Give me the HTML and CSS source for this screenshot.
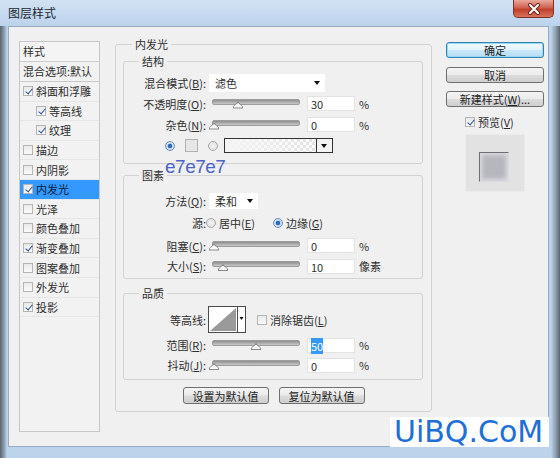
FILE: index.html
```html
<!DOCTYPE html>
<html lang="zh-CN">
<head>
  <meta charset="UTF-8">
  <title>图层样式</title>
  <link rel="stylesheet" href="styles.css">
</head>
<body>
  <div class="window">
    <div class="titlebar">
      <span class="title">图层样式</span>
      <span class="close">
        <svg width="14" height="12" viewBox="0 0 14 12">
          <path d="M3 2 L11 10 M11 2 L3 10" stroke="#6b2a22" stroke-width="4" stroke-linecap="round"/>
          <path d="M3 2 L11 10 M11 2 L3 10" stroke="#fff" stroke-width="2" stroke-linecap="round"/>
        </svg>
      </span>
    </div>

    <div class="frame">
      <div class="client">
        <div class="style-list">
          <div class="list-head">样式</div>
          <div class="list-blend">混合选项:默认</div>
          <div class="list-item"><span class="cb on"></span>斜面和浮雕</div>
          <div class="list-item sub"><span class="cb on"></span>等高线</div>
          <div class="list-item sub"><span class="cb on"></span>纹理</div>
          <div class="list-item"><span class="cb"></span>描边</div>
          <div class="list-item"><span class="cb"></span>内阴影</div>
          <div class="list-item active"><span class="cb on"></span>内发光</div>
          <div class="list-item"><span class="cb"></span>光泽</div>
          <div class="list-item"><span class="cb"></span>颜色叠加</div>
          <div class="list-item"><span class="cb on"></span>渐变叠加</div>
          <div class="list-item"><span class="cb"></span>图案叠加</div>
          <div class="list-item"><span class="cb"></span>外发光</div>
          <div class="list-item"><span class="cb on"></span>投影</div>
        </div>

        <fieldset class="group outer">
          <legend>内发光</legend>

          <fieldset class="group structure">
            <legend>结构</legend>
            <div class="row">
              <span class="label">混合模式(<u>B</u>):</span>
              <span class="select mode">滤色<i class="arrow"></i></span>
            </div>
            <div class="row">
              <span class="label">不透明度(<u>O</u>):</span>
              <span class="slider"><span class="thumb" style="left: 21px"></span></span>
              <span class="field">30</span>
              <span class="unit">%</span>
            </div>
            <div class="row">
              <span class="label">杂色(<u>N</u>):</span>
              <span class="slider"><span class="thumb" style="left: -3px"></span></span>
              <span class="field">0</span>
              <span class="unit">%</span>
            </div>
            <div class="row color-row">
              <span class="radio on"></span>
              <span class="swatch"></span>
              <span class="radio gap"></span>
              <span class="gradient"><span class="gradient-fill"></span><span class="gradient-drop"><i class="arrow"></i></span></span>
            </div>
          </fieldset>

          <fieldset class="group elements">
            <legend>图素</legend>
            <div class="row">
              <span class="label">方法(<u>Q</u>):</span>
              <span class="select method">柔和<i class="arrow"></i></span>
            </div>
            <div class="row tall">
              <span class="label">源:</span>
              <span class="radio first"></span>
              <span class="option">居中(<u>E</u>)</span>
              <span class="radio on second"></span>
              <span class="option">边缘(<u>G</u>)</span>
            </div>
            <div class="row">
              <span class="label">阻塞(<u>C</u>):</span>
              <span class="slider"><span class="thumb" style="left: -3px"></span></span>
              <span class="field">0</span>
              <span class="unit">%</span>
            </div>
            <div class="row short">
              <span class="label">大小(<u>S</u>):</span>
              <span class="slider"><span class="thumb" style="left: 6px"></span></span>
              <span class="field">10</span>
              <span class="unit">像素</span>
            </div>
          </fieldset>

          <fieldset class="group quality">
            <legend>品质</legend>
            <div class="row contour-row">
              <span class="label">等高线:</span>
              <span class="contour">
                <svg width="38" height="27" viewBox="0 0 38 27">
                  <rect x="0.5" y="0.5" width="37" height="26" fill="#fff" stroke="#4a4a4a"/>
                  <polygon points="2,25 28,2 28,25" fill="#9a9a9a"/>
                  <line x1="29.5" y1="1" x2="29.5" y2="26" stroke="#4a4a4a"/>
                  <polygon points="31.5,11 35.5,11 33.5,14" fill="#111"/>
                </svg>
              </span>
              <span class="cb aa"></span>
              <span class="option">消除锯齿(<u>L</u>)</span>
            </div>
            <div class="row short">
              <span class="label">范围(<u>R</u>):</span>
              <span class="slider"><span class="thumb" style="left: 39px"></span></span>
              <span class="field"><span class="selected">50</span></span>
              <span class="unit">%</span>
            </div>
            <div class="row short">
              <span class="label">抖动(<u>J</u>):</span>
              <span class="slider"><span class="thumb" style="left: -3px"></span></span>
              <span class="field">0</span>
              <span class="unit">%</span>
            </div>
          </fieldset>

          <div class="defaults">
            <button class="btn">设置为默认值</button>
            <button class="btn">复位为默认值</button>
          </div>
        </fieldset>

        <div class="side">
          <button class="btn wide primary">确定</button>
          <button class="btn wide cancel">取消</button>
          <button class="btn wide new">新建样式(<u>W</u>)...</button>
          <div class="preview-check"><span class="cb on"></span><span class="option">预览(<u>V</u>)</span></div>
          <div class="preview">
            <div class="preview-swatch"></div>
          </div>
        </div>
      </div>
    </div>

    <div class="note">e7e7e7</div>
    <div class="watermark">UiBQ.CoM</div>
  </div>
</body>
</html>
```

FILE: styles.css
```css
* {
  box-sizing: border-box;
}

body {
  margin: 0;
  width: 560px;
  height: 458px;
  overflow: hidden;
  font-family: "Noto Sans CJK SC", "Noto Sans", sans-serif;
  font-size: 11px;
  line-height: 14px;
  color: #2e2e2e;
  background: #4f5a64;
}

u {
  text-decoration: underline;
}

.window {
  position: relative;
  display: flex;
  flex-direction: column;
  height: 458px;
}

/* title bar */
.titlebar {
  height: 26px;
  display: flex;
  justify-content: space-between;
  align-items: flex-start;
  padding: 0 6px 0 8px;
  background: linear-gradient(#d1e2f4, #bcd3ec);
}

.title {
  margin-top: 6px;
  font-size: 12px;
  color: #1e2833;
}

.close {
  width: 41px;
  height: 18px;
  display: flex;
  align-items: center;
  justify-content: center;
  border: 1px solid #7d3129;
  border-top: none;
  border-radius: 0 0 5px 5px;
  background: linear-gradient(#e9a99b, #d0624f 45%, #c13f2b 55%, #d8735c);
}

/* window frame + client */
.frame {
  flex: 1;
  padding: 0 11px 11px 8px;
  background: linear-gradient(to right, #59646e 0, #8a9bab 4px, #bcd3ec 7px, #bcd3ec calc(100% - 9px), #8a9bab calc(100% - 4px), #59646e 100%);
}

.client {
  height: 100%;
  display: flex;
  align-items: flex-start;
  padding: 10px 0 0 10px;
  background: #f0f0f0;
  border: 1px solid #97abc1;
}

/* left style list */
.style-list {
  width: 81px;
  height: 391px;
  margin-top: 4px;
  border: 1px solid #c7c7c7;
  background: #f2f2f2;
}

.list-head {
  height: 20px;
  line-height: 19px;
  padding-left: 3px;
  border-bottom: 1px solid #cdcdcd;
  background: #f4f4f4;
}

.list-blend {
  height: 20px;
  line-height: 19px;
  padding-left: 3px;
  border-bottom: 1px solid #c9c9c9;
}

.list-item {
  height: 19.6px;
  display: flex;
  align-items: center;
  padding-left: 3px;
  border-bottom: 1px solid #e6e6e6;
}

.list-item.sub {
  padding-left: 16px;
}

.list-item.active {
  background: #3399ff;
  color: #10203a;
}

.list-item .cb {
  margin-right: 3px;
}

/* checkbox / radio */
.cb {
  position: relative;
  display: inline-block;
  flex: none;
  width: 10px;
  height: 10px;
  border: 1px solid #b5b5b5;
  background: linear-gradient(#e9e9e9, #fbfbfb);
}

.cb.on::after {
  content: "";
  position: absolute;
  left: 3px;
  top: 0;
  width: 3px;
  height: 6px;
  border: solid #2f4f9a;
  border-width: 0 1.5px 1.5px 0;
  transform: rotate(40deg);
}

.radio {
  display: inline-block;
  flex: none;
  width: 10px;
  height: 10px;
  border-radius: 50%;
  border: 1px solid #a8a8a8;
  background: radial-gradient(circle, #f4f4f4 0, #dcdcdc 100%);
}

.radio.on {
  border-color: #6f8fb8;
  background: radial-gradient(circle, #3f7fd0 0, #1c5fb8 30%, #bcd4ee 45%, #eef4fa 100%);
}

/* group boxes */
.group {
  margin: 0;
  padding: 0;
  border: 1px solid #d2d2d2;
  border-radius: 3px;
  min-inline-size: 0;
}

.group legend {
  padding: 0 3px;
  margin-left: 15px;
  line-height: 14px;
}

.outer {
  width: 317px;
  margin-left: 15px;
  padding: 0 7px 7px;
}

.outer > legend {
  margin-left: 9px;
}

.outer > .group {
  width: 300px;
}

.structure {
  margin-top: 3px;
  padding: 4px 0 7px;
}

.elements {
  margin-top: 4px;
  padding: 8px 0 2px;
}

.quality {
  margin-top: 7px;
  padding: 4px 0 4px;
}

.row {
  height: 21px;
  display: flex;
  align-items: center;
}

.row.tall {
  height: 24px;
}

.row.short {
  height: 20px;
}

.row.contour-row {
  height: 31px;
}

.label {
  width: 82px;
  flex: none;
  text-align: right;
}

.select {
  position: relative;
  height: 18px;
  margin-left: 3px;
  padding-left: 6px;
  line-height: 18px;
  background: #fff;
}

.select.mode {
  width: 116px;
}

.select.method {
  width: 49px;
  height: 16px;
  line-height: 16px;
}

.arrow {
  position: absolute;
  right: 5px;
  top: 50%;
  margin-top: -2px;
  width: 0;
  height: 0;
  border-left: 3.5px solid transparent;
  border-right: 3.5px solid transparent;
  border-top: 4px solid #111;
}

/* sliders and value fields */
.slider {
  position: relative;
  flex: none;
  width: 88px;
  height: 14px;
  margin-left: 6px;
}

.slider::before {
  content: "";
  position: absolute;
  left: 0;
  right: 0;
  top: 2px;
  height: 4px;
  border-radius: 2px;
  background: linear-gradient(#8e8e8e, #c9c9c9);
  border: 1px solid #9c9c9c;
}

.thumb {
  position: absolute;
  top: 5px;
  width: 10px;
  height: 7px;
  background: #8a8a8a;
  clip-path: polygon(50% 0, 100% 70%, 100% 100%, 0 100%, 0 70%);
}

.thumb::after {
  content: "";
  position: absolute;
  left: 1px;
  top: 1.5px;
  width: 8px;
  height: 4.5px;
  background: #fafafa;
  clip-path: polygon(50% 0, 100% 70%, 100% 100%, 0 100%, 0 70%);
}

.field {
  flex: none;
  width: 48px;
  height: 15px;
  margin-left: 7px;
  padding-left: 3px;
  line-height: 14px;
  background: #fff;
  border: 1px solid #e2e2e2;
}

.selected {
  background: #3399ff;
  color: #fff;
}

.unit {
  margin-left: 4px;
}

/* colour row */
.color-row {
  padding-left: 41px;
}

.swatch {
  width: 13px;
  height: 13px;
  margin-left: 10px;
  background: #e7e7e7;
  border: 1px solid #b0b0b0;
}

.radio.gap {
  margin-left: 10px;
}

.gradient {
  display: flex;
  width: 109px;
  height: 15px;
  margin-left: 6px;
  border: 1px solid #333;
}

.gradient-fill {
  flex: 1;
  background:
    linear-gradient(to right, #f4f4f4 0, rgba(244, 244, 244, 0.2) 100%),
    repeating-conic-gradient(#ffffff 0 25%, #dedede 0 50%) 0 0 / 6px 6px;
}

.gradient-drop {
  position: relative;
  width: 16px;
  border-left: 1px solid #333;
  background: #f4f4f4;
}

/* elements group */
.radio.first {
  margin-left: 0;
}

.radio.second {
  margin-left: 18px;
}

.option {
  margin-left: 3px;
}

/* quality group */
.contour {
  display: block;
  height: 27px;
  margin-left: 2px;
}

.cb.aa {
  margin-left: 11px;
}

.defaults {
  display: flex;
  justify-content: center;
  gap: 10px;
  margin-top: 7px;
}

/* buttons */
.btn {
  width: 86px;
  height: 17px;
  padding: 0;
  font-family: inherit;
  font-size: 11px;
  line-height: 14px;
  color: #222;
  border: 1px solid #707070;
  border-radius: 3px;
  background: linear-gradient(#f4f4f4, #ebebeb 48%, #dcdcdc 52%, #cfcfcf);
}

.side {
  width: 98px;
  margin-left: 14px;
}

.btn.wide {
  display: block;
  width: 98px;
  height: 16px;
}

.btn.primary {
  margin-top: 5px;
  border-color: #3c7fb1;
  box-shadow: inset 0 0 0 1px #8fdcf7;
  background: linear-gradient(#f2fafe, #e3f3fc 48%, #c9e8fa 52%, #b6dcf3);
}

.btn.cancel {
  margin-top: 9px;
}

.btn.new {
  margin-top: 8px;
}

.preview-check {
  display: flex;
  align-items: center;
  height: 14px;
  margin-top: 8px;
  padding-left: 19px;
}

.preview {
  width: 60px;
  height: 58px;
  margin: 5px 0 0 19px;
  padding: 17px 0 0 13px;
  background: #e2e2e2;
  border: 1px solid #ebebeb;
}

.preview-swatch {
  width: 30px;
  height: 30px;
  border: 1px solid;
  border-color: #6e6e74 #d9d9de #d9d9de #6e6e74;
  background: #b6b6be;
  box-shadow: inset 0 0 4px 2px #dcdce2;
}

/* overlays */
.note {
  position: absolute;
  left: 165px;
  top: 156px;
  font-family: "Liberation Sans", sans-serif;
  font-size: 19px;
  line-height: 22px;
  letter-spacing: -0.5px;
  color: #4b64c8;
}

.watermark {
  position: absolute;
  left: 390px;
  top: 417px;
  width: 159px;
  height: 30px;
  padding-left: 4px;
  font-family: "DejaVu Sans", sans-serif;
  font-size: 30px;
  line-height: 30px;
  color: #1f6fd6;
  background: #fff;
}
```
